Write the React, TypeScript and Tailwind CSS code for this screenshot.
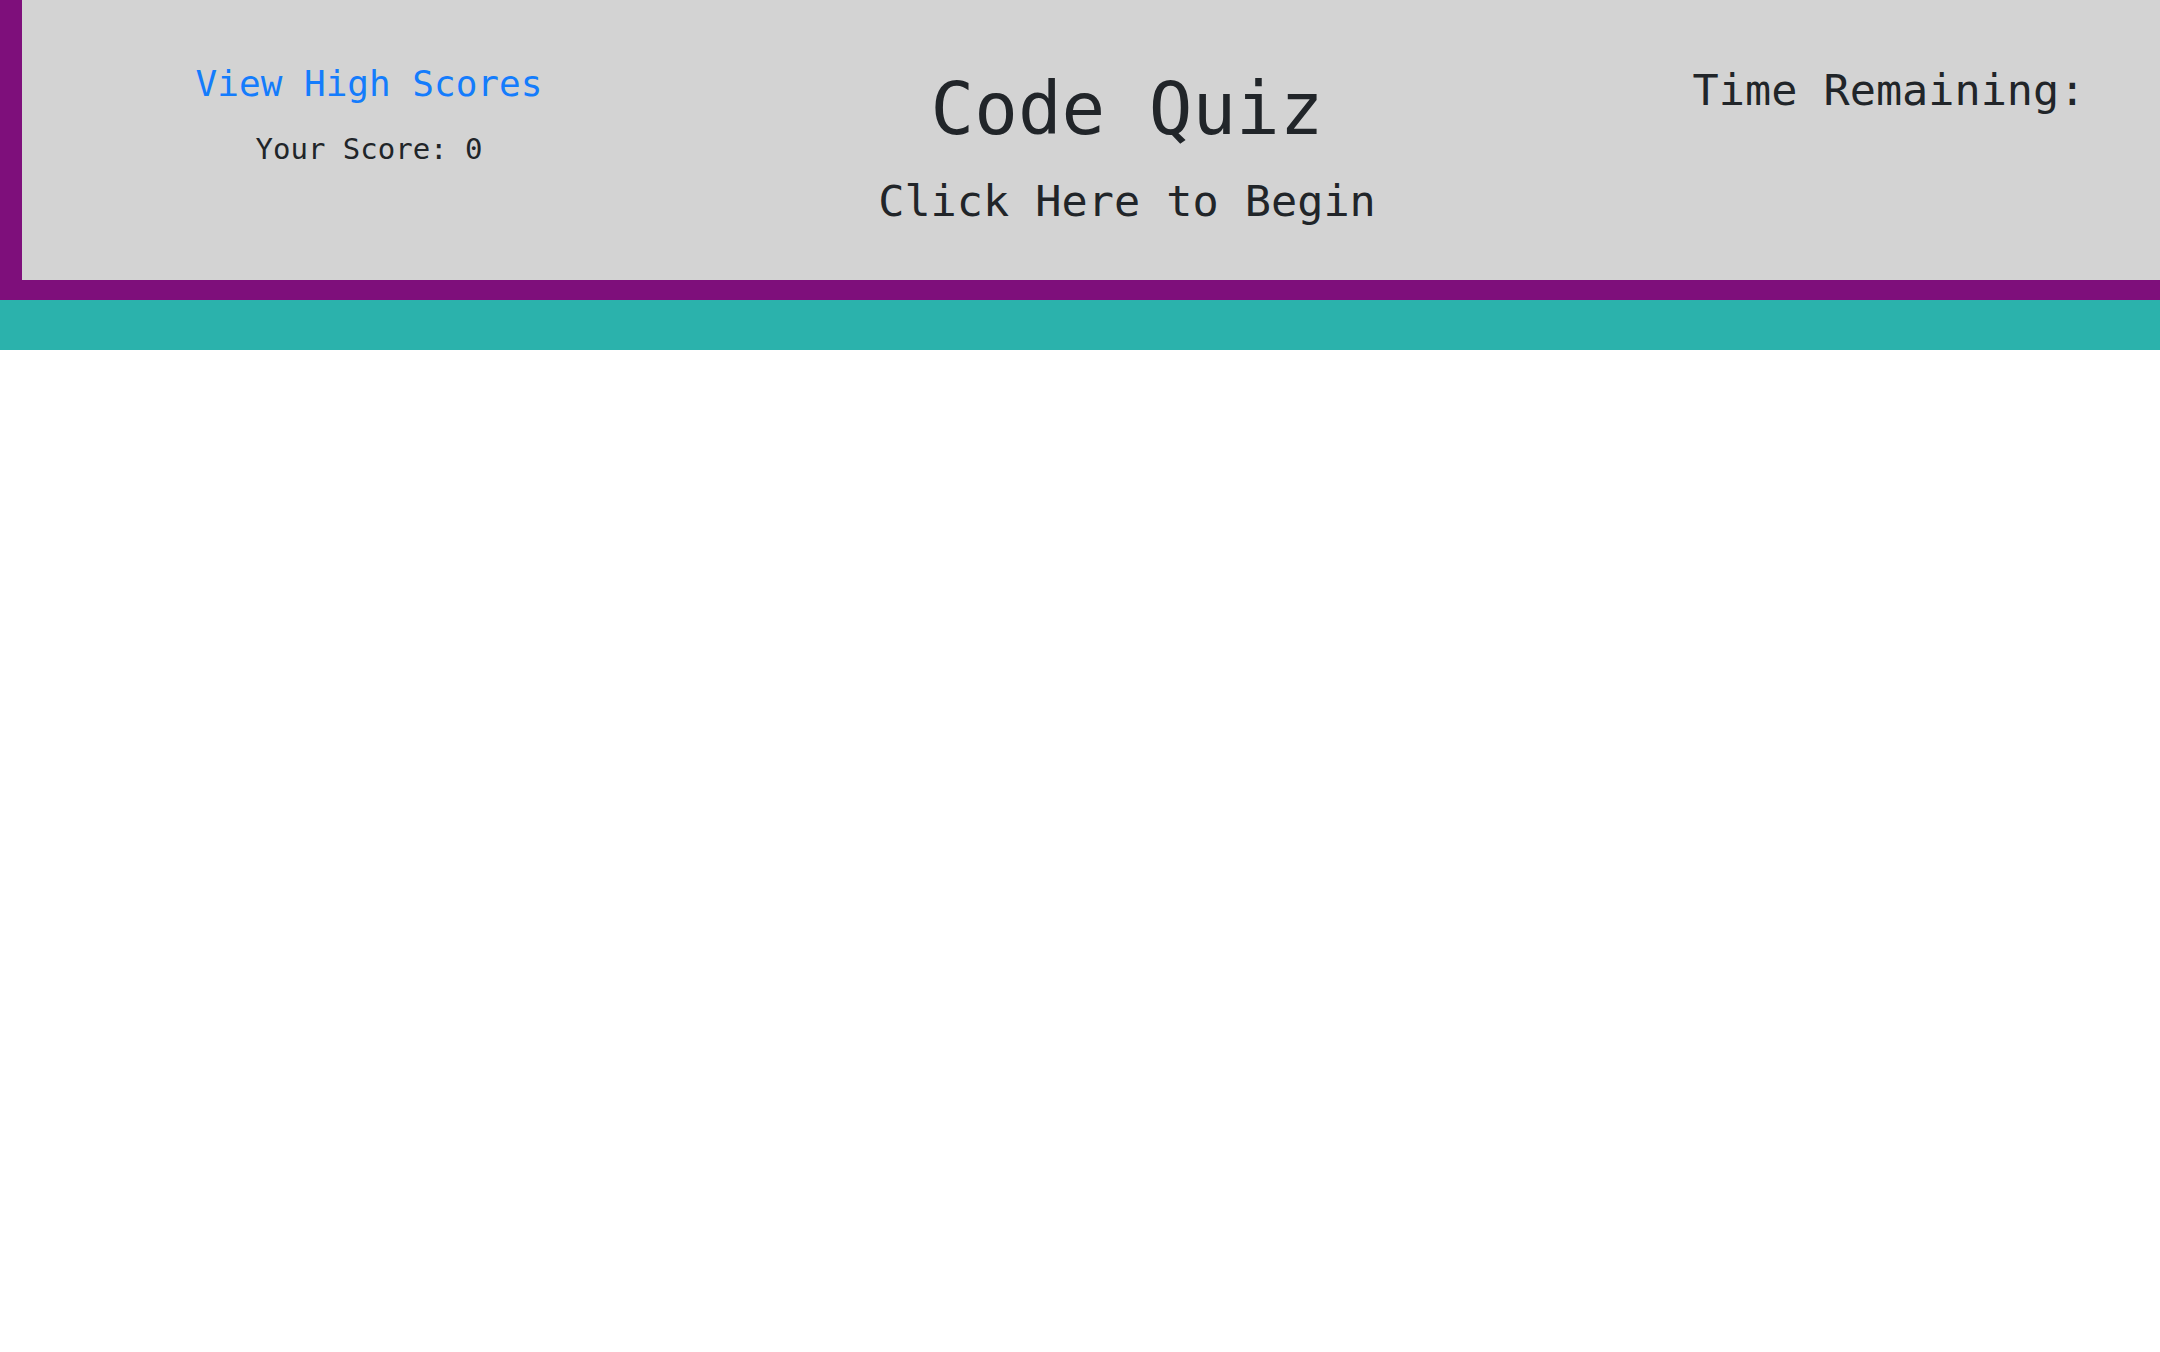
export default function App() {
  return (
    <div className="min-h-screen bg-white font-['DejaVu_Sans_Mono',monospace] text-[#212529]">
      {/* Header box with purple frame */}
      <header className="border-b-[20px] border-l-[22px] border-[#7e0f7b] bg-[#d3d3d3]">
        <div className="h-[280px] overflow-hidden">
          <div className="-ml-[32px] grid w-[2274px] grid-cols-3">
            <div className="flex flex-col items-center pt-[62px]">
              <a href="#" className="text-[36px] leading-[1.2] text-[#147cfc] hover:underline">
                View High Scores
              </a>
              <p className="mt-[27px] text-[29px] leading-[1.2]">Your Score: 0</p>
            </div>

            <div className="flex flex-col items-center pt-[66px]">
              <h1 className="text-[72.5px] leading-[1.2]">Code Quiz</h1>
              <button type="button" className="mt-[22px] text-[43.5px] leading-[1.2]">
                Click Here to Begin
              </button>
            </div>

            <div className="flex flex-col items-center pl-[8px] pt-[64px]">
              <h2 className="text-[43.5px] leading-[1.2]">Time Remaining:</h2>
            </div>
          </div>
        </div>
      </header>

      {/* Teal strip */}
      <div className="h-[50px] bg-[#2bb2ac]" />
    </div>
  )
}
